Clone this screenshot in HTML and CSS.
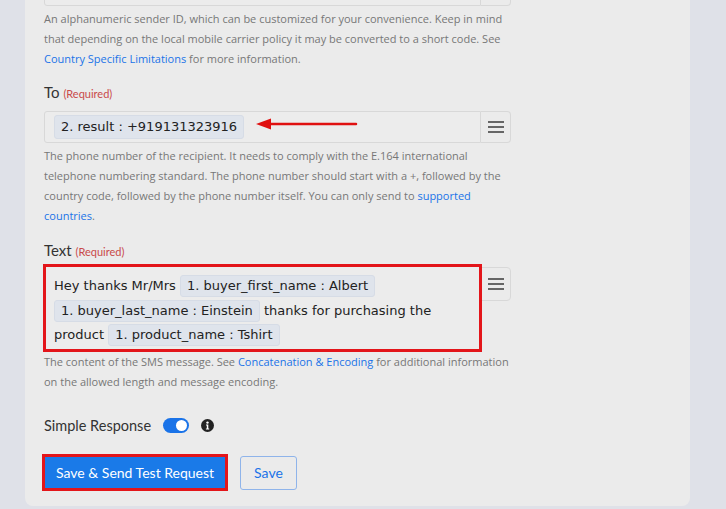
FILE: index.html
```html
<!DOCTYPE html>
<html lang="en">
<head>
    <meta charset="UTF-8">
    <meta name="viewport" content="width=device-width, initial-scale=1.0">
    <title>SMS Action Setup</title>
    <link rel="stylesheet" href="styles.css">
</head>
<body>
    <div class="card">
        <!-- From (cut off at top) -->
        <div class="field-row top-row">
            <div class="field-input"></div>
            <div class="menu-btn"></div>
        </div>
        <p class="help">An alphanumeric sender ID, which can be customized for your convenience. Keep in mind that depending on the local mobile carrier policy it may be converted to a short code. See <a href="#">Country Specific Limitations</a> for more information.</p>

        <!-- To -->
        <div class="label">To <span class="req">(Required)</span></div>
        <div class="field-row">
            <div class="field-input">
                <span class="chip">2. result : +919131323916</span>
                <svg class="arrow" width="104" height="14" viewBox="0 0 104 14">
                    <path d="M14 7 H101" stroke="#e01010" stroke-width="2.5" stroke-linecap="round"/>
                    <path d="M1 7 L16 1.5 L16 12.5 Z" fill="#e01010"/>
                </svg>
            </div>
            <div class="menu-btn">
                <svg width="18" height="14" viewBox="0 0 18 14"><path d="M1 2H17M1 7H17M1 12H17" stroke="#666" stroke-width="2.2"/></svg>
            </div>
        </div>
        <p class="help">The phone number of the recipient. It needs to comply with the E.164 international telephone numbering standard. The phone number should start with a +, followed by the country code, followed by the phone number itself. You can only send to <a href="#">supported countries</a>.</p>

        <!-- Text -->
        <div class="label text-label">Text <span class="req">(Required)</span></div>
        <div class="field-row">
            <div class="field-input textarea">
                Hey thanks Mr/Mrs <span class="chip">1. buyer_first_name : Albert</span>
                <span class="chip">1. buyer_last_name : Einstein</span> thanks for purchasing the product <span class="chip">1. product_name : Tshirt</span>
            </div>
            <div class="menu-btn">
                <svg width="18" height="14" viewBox="0 0 18 14"><path d="M1 2H17M1 7H17M1 12H17" stroke="#666" stroke-width="2.2"/></svg>
            </div>
        </div>
        <p class="help text-help">The content of the SMS message. See <a href="#">Concatenation &amp; Encoding</a> for additional information on the allowed length and message encoding.</p>

        <!-- Simple response -->
        <div class="toggle-row">
            <span>Simple Response</span>
            <span class="toggle"><span class="knob"></span></span>
            <svg width="13" height="13" viewBox="0 0 13 13"><circle cx="6.5" cy="6.5" r="6.5" fill="#222"/><circle cx="6.5" cy="3.6" r="1.2" fill="#fff"/><path d="M5 5.6H7.3V9.4H8.2V10.4H4.9V9.4H5.8V6.6H5Z" fill="#fff"/></svg>
        </div>

        <div class="actions">
            <button class="btn-primary">Save &amp; Send Test Request</button>
            <button class="btn-outline">Save</button>
        </div>
    </div>
</body>
</html>
```

FILE: styles.css
```css
body {
    margin: 0;
    padding: 0;
    background-color: #dfe1e8;
    font-family: 'Lato', sans-serif;
    color: #333;
}

.card {
    margin-left: 25px;
    width: 665px;
    height: 506px;
    padding-left: 19px;
    background-color: #ebebeb;
    border-radius: 0 0 8px 8px;
    box-sizing: border-box;
    overflow: hidden;
}

.field-row {
    display: flex;
    align-items: flex-start;
    width: 467px;
}

.top-row {
    margin-top: -26px;
}

.field-input {
    position: relative;
    width: 437px;
    height: 32px;
    box-sizing: border-box;
    border: 1px solid #d8d8d8;
    border-radius: 3px 0 0 3px;
    background-color: #ececec;
    display: flex;
    align-items: center;
    padding-left: 9px;
}

.menu-btn {
    width: 30px;
    height: 32px;
    box-sizing: border-box;
    border: 1px solid #d8d8d8;
    border-left: none;
    border-radius: 0 4px 4px 0;
    display: flex;
    align-items: center;
    justify-content: center;
}

.chip {
    display: inline-block;
    background-color: #dfe4ec;
    border: 1px solid #d6dce6;
    border-radius: 3px;
    padding: 2px 6px;
    font-family: 'DejaVu Sans', sans-serif;
    font-size: 13px;
    line-height: 18px;
    color: #222;
}

.arrow {
    position: absolute;
    left: 210px;
    top: 5px;
}

.help {
    margin: 3px 0 0;
    width: 470px;
    font-family: 'Open Sans', sans-serif;
    font-size: 11px;
    line-height: 20px;
    color: #777;
}

.text-help {
    margin-top: 0;
}

.help a {
    color: #1a73e8;
    text-decoration: none;
}

.label {
    margin-top: 15px;
    margin-bottom: 9px;
    font-size: 15px;
    line-height: 17px;
    color: #333;
}

.text-label {
    margin-top: 16px;
    margin-bottom: 4px;
}

.req {
    font-size: 11px;
    color: #c94a4a;
}

.textarea {
    display: block;
    height: 88px;
    margin-left: -1px;
    padding: 7px 8px 0 8px;
    border: 3px solid #e3151a;
    border-radius: 0;
    width: 439px;
    font-family: 'DejaVu Sans', sans-serif;
    font-size: 13px;
    line-height: 24.5px;
    color: #222;
}

.textarea .chip {
    padding: 1px 6px;
    line-height: 18px;
}

.textarea + .menu-btn {
    margin-top: 3px;
    height: 34px;
    border-left: 1px solid #d8d8d8;
    margin-left: -1px;
}

.toggle-row {
    display: flex;
    align-items: center;
    gap: 12px;
    margin-top: 25px;
    font-size: 14.5px;
    color: #333;
}

.toggle {
    position: relative;
    width: 26px;
    height: 15px;
    border-radius: 8px;
    background-color: #1a73e8;
}

.knob {
    position: absolute;
    right: 2px;
    top: 2px;
    width: 11px;
    height: 11px;
    border-radius: 50%;
    background-color: #fff;
}

.actions {
    display: flex;
    align-items: center;
    gap: 12px;
    margin-top: 20px;
    margin-left: -2px;
}

.btn-primary {
    height: 37px;
    padding: 0 11px;
    border: 3px solid #e3151a;
    background-color: #1a7ae8;
    color: #fff;
    font-family: 'Lato', sans-serif;
    font-size: 14px;
    cursor: pointer;
}

.btn-outline {
    height: 34px;
    padding: 0 13px;
    border: 1px solid #8fb4ea;
    border-radius: 3px;
    background-color: transparent;
    color: #1a73e8;
    font-family: 'Lato', sans-serif;
    font-size: 14px;
    cursor: pointer;
}
```
